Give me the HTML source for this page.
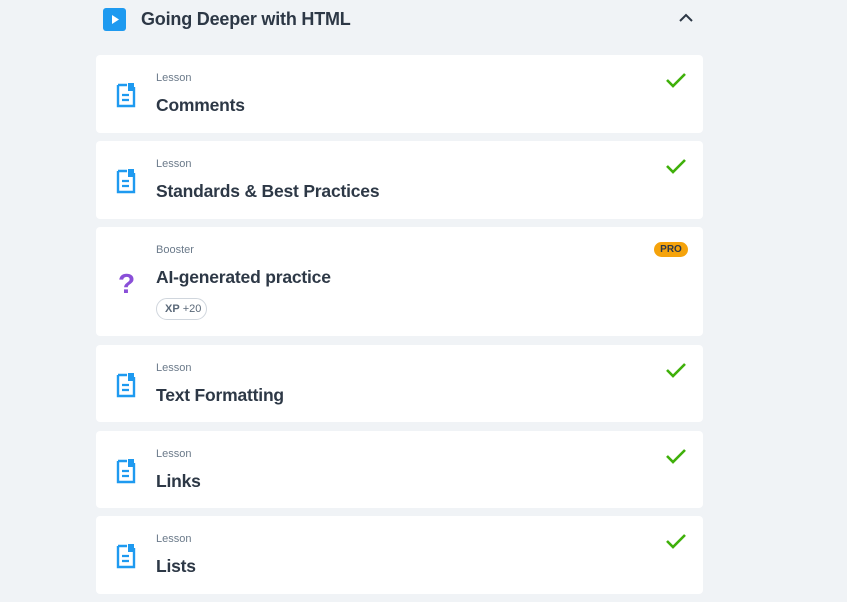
<!DOCTYPE html><html><head><style>
body{margin:0;width:847px;height:602px;background:#f0f3f6;font-family:"Liberation Sans",sans-serif;position:relative;overflow:hidden}
.h{position:absolute;left:103px;top:8px;width:23px;height:23px;background:#1e9af0;border-radius:3px}
.ht{position:absolute;left:141px;top:8px;font-size:18px;font-weight:bold;color:#2d3846;line-height:22px;letter-spacing:-0.2px}
.card{position:absolute;left:96px;width:607px;background:#fff;border-radius:4px}
.lab{position:absolute;left:60px;top:17px;font-size:11px;color:#6b7a8a}
.tt{position:absolute;left:60px;top:40px;font-size:17.5px;font-weight:bold;color:#2d3846;letter-spacing:-0.2px}
.ic{position:absolute;left:20px;top:27px}
.ck{position:absolute;right:16px;top:17px}
</style></head><body>
<div class="h"><svg width="23" height="23"><path d="M9 7L16 11.5L9 16Z" fill="#fff"/></svg></div>
<div class="ht">Going Deeper with HTML</div>
<svg style="position:absolute;left:678px;top:12px" width="16" height="12"><path d="M2 9L8 3L14 9" stroke="#2d3846" stroke-width="2" fill="none"/></svg>
<script>
const d=[[55,78,"Lesson","Comments"],[141,78,"Lesson","Standards &amp; Best Practices"],[345,77,"Lesson","Text Formatting"],[431,77,"Lesson","Links"],[516,78,"Lesson","Lists"]];
const doc='<svg width="20" height="26"><path d="M2 3H11M2 3V24H18V5" stroke="#1e9af0" stroke-width="2.4" fill="none"/><rect x="12" y="1" width="6" height="8" fill="#1e9af0"/><path d="M6 13H13M6 18H13" stroke="#1e9af0" stroke-width="2.2"/></svg>';
const ck='<svg width="22" height="16"><path d="M2 8L8 14L20 2" stroke="#3fb00a" stroke-width="2.6" fill="none"/></svg>';
for(const [t,h,l,n] of d)document.write(`<div class="card" style="top:${t}px;height:${h}px"><div class="ic">${doc}</div><div class="lab">${l}</div><div class="tt">${n}</div><div class="ck">${ck}</div></div>`);
</script>
<div class="card" style="top:227px;height:109px">
<div class="lab">Booster</div><div class="tt">AI-generated practice</div>
<div style="position:absolute;left:22px;top:42px;font-size:28px;font-weight:bold;color:#8a4fd8;line-height:30px">?</div>
<div style="position:absolute;left:558px;top:15px;width:34px;height:15px;background:#f5a30b;border-radius:8px;font-size:10px;font-weight:bold;color:#2d3846;text-align:center;line-height:15px">PRO</div>
<div style="position:absolute;left:60px;top:71px;width:51px;height:22px;border:1px solid #d0d6dd;border-radius:11px;font-size:11px;color:#5a6878;line-height:20px;box-sizing:border-box;padding-left:8px"><b>XP</b> +20</div>
</div>
</body></html>
